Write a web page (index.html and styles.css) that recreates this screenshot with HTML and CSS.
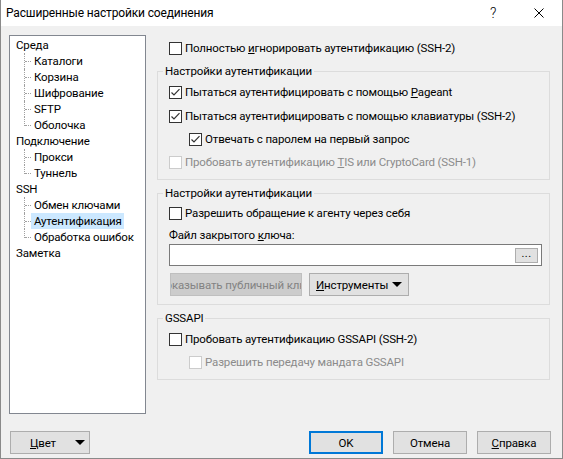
FILE: index.html
```html
<!DOCTYPE html>
<html lang="ru">
<head>
<meta charset="utf-8">
<title>Расширенные настройки соединения</title>
<link rel="stylesheet" href="styles.css">
</head>
<body>
<div class="window">
  <div class="titlebar">
    <span class="title">Расширенные настройки соединения</span>
    <span class="tb-btn help">?</span>
    <span class="tb-btn close"><svg width="10" height="10" viewBox="0 0 10 10"><path d="M0.5 0.5 L9.5 9.5 M9.5 0.5 L0.5 9.5" stroke="#000" stroke-width="1" fill="none"/></svg></span>
  </div>
  <div class="main">
    <div class="tree">
      <ul class="tree-list">
        <li class="node"><span class="label">Среда</span>
          <ul class="children">
            <li><span class="label">Каталоги</span></li>
            <li><span class="label">Корзина</span></li>
            <li><span class="label">Шифрование</span></li>
            <li><span class="label">SFTP</span></li>
            <li><span class="label">Оболочка</span></li>
          </ul>
        </li>
        <li class="node"><span class="label">Подключение</span>
          <ul class="children">
            <li><span class="label">Прокси</span></li>
            <li><span class="label">Туннель</span></li>
          </ul>
        </li>
        <li class="node"><span class="label">SSH</span>
          <ul class="children">
            <li><span class="label">Обмен ключами</span></li>
            <li><span class="label selected">Аутентификация</span></li>
            <li><span class="label">Обработка ошибок</span></li>
          </ul>
        </li>
        <li class="node"><span class="label">Заметка</span></li>
      </ul>
    </div>
    <div class="panel">
      <div class="row top-row">
        <span class="box"></span><span class="text">Полностью <u>и</u>гнорировать аутентификацию (SSH-2)</span>
      </div>
      <fieldset class="group g1">
        <legend>Настройки аутентификации</legend>
        <div class="row">
          <span class="box"><svg width="11" height="11" viewBox="0 0 11 11"><path d="M1.5 5.5 L4 8 L9.5 2.2" stroke="#333" stroke-width="1.2" fill="none"/></svg></span><span class="text">Пытаться аутентифицировать с помощью <u>P</u>ageant</span>
        </div>
        <div class="row">
          <span class="box"><svg width="11" height="11" viewBox="0 0 11 11"><path d="M1.5 5.5 L4 8 L9.5 2.2" stroke="#333" stroke-width="1.2" fill="none"/></svg></span><span class="text">Пытаться аутентифицировать с помощью клавиатуры (SSH-2)</span>
        </div>
        <div class="row short indent">
          <span class="box"><svg width="11" height="11" viewBox="0 0 11 11"><path d="M1.5 5.5 L4 8 L9.5 2.2" stroke="#333" stroke-width="1.2" fill="none"/></svg></span><span class="text">Отвечать с паролем на первый запрос</span>
        </div>
        <div class="row disabled">
          <span class="box"></span><span class="text">Пробовать аутентификацию <u>T</u>IS или CryptoCard (SSH-1)</span>
        </div>
      </fieldset>
      <fieldset class="group g2">
        <legend>Настройки аутентификации</legend>
        <div class="row">
          <span class="box"></span><span class="text">Разрешить обращение к агенту через себя</span>
        </div>
        <div class="field-label">Файл закрытого <u>к</u>люча:</div>
        <div class="input">
          <span class="browse">...</span>
        </div>
        <div class="btn-row">
          <span class="btn btn-disabled"><span class="clip">Показывать публичный ключ</span></span>
          <span class="btn btn-tools"><span><u>И</u>нструменты</span><span class="tri"></span></span>
        </div>
      </fieldset>
      <fieldset class="group g3">
        <legend>GSSAPI</legend>
        <div class="row">
          <span class="box"></span><span class="text">Пробовать аутентификацию GSSAPI (SSH-2)</span>
        </div>
        <div class="row short indent disabled">
          <span class="box"></span><span class="text">Разрешить передачу мандата GSSAPI</span>
        </div>
      </fieldset>
    </div>
  </div>
  <div class="footer">
    <span class="btn btn-color"><span><u>Ц</u>вет</span><span class="tri"></span></span>
    <span class="spacer"></span>
    <span class="btn btn-dlg btn-default">OK</span>
    <span class="btn btn-dlg">Отмена</span>
    <span class="btn btn-dlg"><u>С</u>правка</span>
  </div>
</div>
</body>
</html>
```
FILE: styles.css
```css
html, body {
  margin: 0;
  padding: 0;
}
body {
  font-family: "Segoe UI", Roboto, "Noto Sans", sans-serif;
  font-size: 11.5px;
  letter-spacing: -0.15px;
  color: #000;
  background: #f0f0f0;
}
.window {
  width: 563px;
  height: 459px;
  box-sizing: border-box;
  border: 1px solid #8a8a8a;
  border-top: none;
  background: #f0f0f0;
  display: flex;
  flex-direction: column;
}
.titlebar {
  height: 26px;
  flex-shrink: 0;
  background: #fff;
  display: flex;
  align-items: center;
}
.title {
  flex: 1;
  padding-left: 5px;
  font-size: 12px;
  white-space: nowrap;
}
.tb-btn {
  width: 46px;
  height: 26px;
  display: flex;
  align-items: center;
  justify-content: center;
}
.help {
  font-size: 14px;
  font-weight: 300;
}
.main {
  display: flex;
  padding: 9px 0 0 8px;
  gap: 11px;
}
.tree {
  width: 137px;
  height: 379px;
  box-sizing: border-box;
  border: 1px solid #828790;
  background: #fff;
  padding-top: 1px;
}
.tree-list, .children {
  list-style: none;
  margin: 0;
  padding: 0;
}
.node > .label {
  display: block;
  line-height: 16px;
  padding-left: 6px;
  white-space: nowrap;
}
.children li {
  position: relative;
  line-height: 16px;
  height: 16px;
  padding-left: 21px;
  white-space: nowrap;
}
.children li::before {
  content: "";
  position: absolute;
  left: 14px;
  top: 0;
  height: 16px;
  border-left: 1px dotted #a0a0a0;
}
.children li:last-child::before {
  height: 9px;
}
.children li::after {
  content: "";
  position: absolute;
  left: 15px;
  top: 8px;
  width: 6px;
  border-top: 1px dotted #a0a0a0;
}
.children .label {
  display: inline-block;
  padding: 0 2px 0 3px;
}
.label.selected {
  background: #cce8ff;
}
.panel {
  width: 393px;
  display: flex;
  flex-direction: column;
}
.row {
  display: flex;
  align-items: center;
  height: 24px;
}
.row.short {
  height: 22px;
}
.row.indent {
  padding-left: 20px;
}
.top-row {
  margin-top: 1px;
  padding-left: 12px;
}
.box {
  width: 13px;
  height: 13px;
  box-sizing: border-box;
  border: 1px solid #333;
  background: #fff;
  display: flex;
  align-items: center;
  justify-content: center;
  flex-shrink: 0;
}
.text {
  margin-left: 3px;
  white-space: nowrap;
}
.disabled .box {
  border-color: #cccccc;
}
.disabled .text {
  color: #8b8b8b;
}
.group {
  margin: 0;
  border: 1px solid #dcdcdc;
  min-width: 0;
}
.group legend {
  margin-left: -6px;
  padding: 0 2px;
  line-height: 16px;
}
.g1 {
  margin-top: 3px;
  padding: 1px 7px 5px 11px;
}
.g2 {
  margin-top: 5px;
  padding: 0 7px 8px 11px;
}
.g3 {
  margin-top: 5px;
  padding: 1px 7px 6px 11px;
}
.field-label {
  margin-top: 2px;
  line-height: 16px;
}
.input {
  margin-top: 1px;
  height: 22px;
  box-sizing: border-box;
  border: 1px solid #7a7a7a;
  background: #fff;
  display: flex;
  align-items: center;
  justify-content: flex-end;
  padding-right: 3px;
}
.browse {
  width: 23px;
  height: 15px;
  box-sizing: border-box;
  border: 1px solid #adadad;
  background: #e1e1e1;
  display: flex;
  align-items: center;
  justify-content: center;
  font-size: 11px;
  line-height: 10px;
  padding-bottom: 2px;
  letter-spacing: 0.5px;
}
.btn-row {
  margin-top: 7px;
  display: flex;
  gap: 7px;
  padding-left: 1px;
}
.btn {
  height: 23px;
  box-sizing: border-box;
  border: 1px solid #adadad;
  background: #e1e1e1;
  display: flex;
  align-items: center;
  justify-content: center;
  white-space: nowrap;
}
.btn-disabled {
  width: 132px;
  background: #cccccc;
  border-color: #bfbfbf;
  color: #838383;
  overflow: hidden;
}
.clip {
  flex-shrink: 0;
}
.btn-tools {
  width: 100px;
  justify-content: space-between;
  padding: 0 6px 0 6px;
}
.tri {
  width: 0;
  height: 0;
  flex-shrink: 0;
  border-left: 5px solid transparent;
  border-right: 5px solid transparent;
  border-top: 5px solid #000;
}
.footer {
  display: flex;
  align-items: center;
  margin-top: 17px;
  padding: 0 11px 0 9px;
}
.btn-color {
  width: 80px;
  justify-content: space-between;
  padding: 0 4px 0 19px;
}
.spacer {
  flex: 1;
}
.btn-dlg {
  width: 74px;
  margin-left: 10px;
}
.btn-default {
  border-color: #0078d7;
  box-shadow: inset 0 0 0 1px #0078d7;
}
```
